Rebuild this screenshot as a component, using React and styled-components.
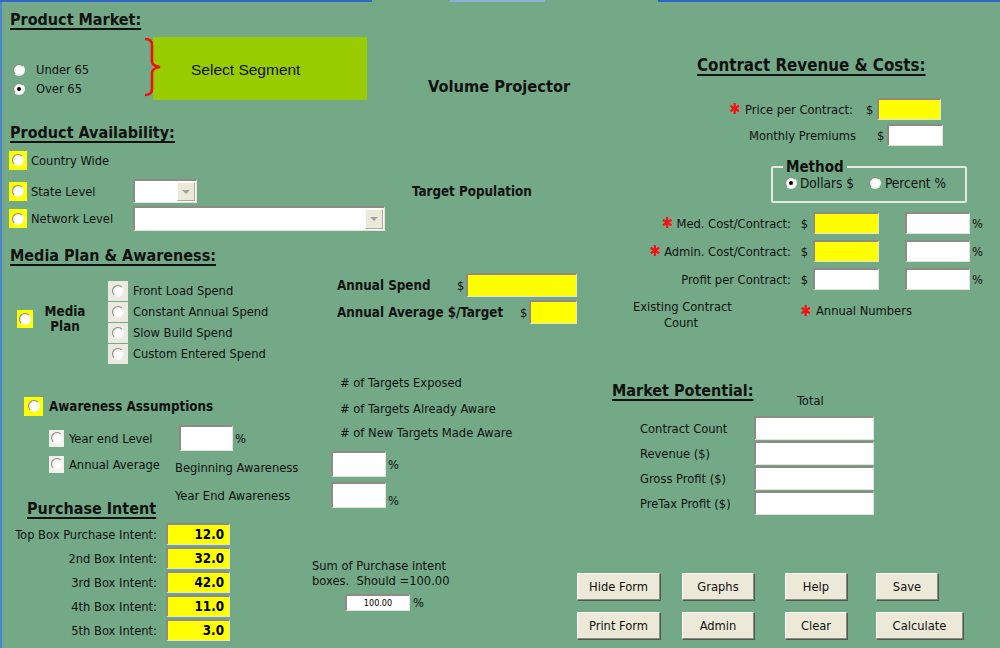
import React from 'react'
import styled, { createGlobalStyle } from 'styled-components'

const ui = `"DejaVu Sans Condensed", "DejaVu Sans", Tahoma, sans-serif`

const GlobalStyle = createGlobalStyle`
  html, body { margin: 0; padding: 0; background: #73a987; }
  body { font-family: ${ui}; font-size: 12.8px; color: #111; }
  * { box-sizing: border-box; }
`

const Page = styled.div`
  width: 1000px;
  height: 648px;
  overflow: hidden;
  background: #73a987;
  box-shadow: inset 2px 0 0 #4d84cf;
  display: flex;
  flex-direction: column;
`
const Strip = styled.div`
  display: flex;
  height: 2px;
  flex-shrink: 0;
`
const StripSeg = styled.div`
  width: ${p => p.$w}px;
  background: ${p => p.$c};
`
const Body = styled.div`
  display: flex;
  flex: 1;
`
const LeftCol = styled.div`
  width: 577px;
  display: flex;
  flex-direction: column;
  align-items: flex-start;
`
const RightCol = styled.div`
  flex: 1;
  display: flex;
  flex-direction: column;
  align-items: flex-start;
`
const SectionTitle = styled.div`
  margin: ${p => p.$mt || 0}px 0 0 ${p => p.$ml || 0}px;
  width: ${p => (p.$w ? p.$w + 'px' : 'auto')};
  flex-shrink: 0;
  height: 20px;
  line-height: 20px;
  font-size: ${p => p.$size || 16}px;
  font-weight: bold;
  color: #111;
  text-decoration: underline;
  text-decoration-thickness: 2px;
  text-underline-offset: 3px;
  white-space: nowrap;
`
const Row = styled.div`
  display: flex;
  align-items: ${p => p.$align || 'center'};
  width: ${p => (p.$w ? p.$w + 'px' : 'auto')};
  height: ${p => (p.$h ? p.$h + 'px' : 'auto')};
  margin: ${p => p.$mt || 0}px 0 0 ${p => p.$ml || 0}px;
  flex-shrink: 0;
`
const Col = styled.div`
  display: flex;
  flex-direction: column;
  align-items: flex-start;
  width: ${p => (p.$w ? p.$w + 'px' : 'auto')};
  margin: ${p => p.$mt || 0}px 0 0 ${p => p.$ml || 0}px;
  padding-top: ${p => p.$pt || 0}px;
  flex-shrink: 0;
`
const Txt = styled.span`
  display: inline-block;
  flex-shrink: 0;
  width: ${p => (p.$w ? p.$w + 'px' : 'auto')};
  margin: ${p => p.$mt || 0}px 0 0 ${p => p.$ml || 0}px;
  padding-right: ${p => p.$pr || 0}px;
  align-self: ${p => p.$self || 'auto'};
  font-size: ${p => p.$size || (p.$bold ? 13.3 : 12.8)}px;
  font-weight: ${p => (p.$bold ? 'bold' : 'normal')};
  line-height: ${p => p.$lh || 'normal'};
  text-align: ${p => p.$align || 'left'};
  white-space: nowrap;
  color: #111;
`
const Star = styled.span`
  display: inline-block;
  flex-shrink: 0;
  width: ${p => p.$w || 16}px;
  margin: ${p => p.$mt || 0}px 0 0 ${p => p.$ml || 0}px;
  color: #f01414;
  font-size: 15px;
  font-weight: bold;
  line-height: 14px;
  text-align: left;
`
const Radio = styled.span`
  position: relative;
  display: inline-block;
  flex-shrink: 0;
  width: 12px;
  height: 12px;
  border-radius: 50%;
  border: 1px solid;
  border-color: #8a8a82 #f6f6f0 #f6f6f0 #8a8a82;
  background: radial-gradient(circle at 55% 55%, #ffffff 0 40%, #e2e0d4 85%);
  &::after {
    content: '';
    position: absolute;
    left: 3px;
    top: 3px;
    width: 4px;
    height: 4px;
    border-radius: 50%;
    background: #000;
    display: ${p => (p.$on ? 'block' : 'none')};
  }
`
const Well = styled.span`
  display: inline-flex;
  align-items: center;
  justify-content: center;
  flex-shrink: 0;
  width: ${p => p.$w}px;
  height: ${p => p.$h}px;
  margin-left: ${p => p.$ml || 0}px;
  background: ${p => p.$bg};
`
const Field = styled.div`
  flex-shrink: 0;
  width: ${p => p.$w}px;
  height: ${p => p.$h || 22}px;
  margin-left: ${p => p.$ml || 0}px;
  background: ${p => (p.$yellow ? '#ffff00' : '#ffffff')};
  border-top: 2px solid #8c8c84;
  border-left: 2px solid #8c8c84;
  border-right: 1px solid #e4e4da;
  border-bottom: 1px solid #e4e4da;
  display: flex;
  align-items: center;
  justify-content: ${p => (p.$small ? 'center' : 'flex-end')};
  padding-right: ${p => (p.$small ? 0 : 5)}px;
  font-family: ${ui};
  font-size: ${p => (p.$small ? 9 : 13.3)}px;
  font-weight: ${p => (p.$small ? 'normal' : 'bold')};
  color: #000;
`
const Select = styled.div`
  flex-shrink: 0;
  width: ${p => p.$w}px;
  height: ${p => p.$h}px;
  background: #fff;
  border-top: 2px solid #8c8c84;
  border-left: 2px solid #8c8c84;
  border-right: 1px solid #e4e4da;
  border-bottom: 1px solid #e4e4da;
  display: flex;
  justify-content: flex-end;
  padding: 1px;
`
const DropBtn = styled.span`
  width: 18px;
  background: #ece9d8;
  border: 1px solid;
  border-color: #fbfbf6 #a8a89c #a8a89c #fbfbf6;
  display: flex;
  align-items: center;
  justify-content: center;
  &::before {
    content: '';
    border-left: 4px solid transparent;
    border-right: 4px solid transparent;
    border-top: 4px solid #a4a49c;
  }
`
const MarketRow = styled.div`
  display: flex;
  height: 63px;
  margin-top: 7px;
`
const RadioItem = styled.div`
  display: flex;
  align-items: center;
  height: ${p => p.$h || 19}px;
`
const BraceSvg = styled.svg`
  position: relative;
  z-index: 1;
  flex-shrink: 0;
`
const SegmentBox = styled.div`
  width: 214px;
  height: 63px;
  margin-left: -10px;
  background: #99cc00;
  display: flex;
  align-items: center;
  padding: 2px 0 0 38px;
  font-family: "Liberation Sans", Arial, sans-serif;
  font-size: 15.5px;
  color: #111;
`
const Headline = styled.div`
  align-self: flex-end;
  margin: 0 0 4px 61px;
  font-size: 16.3px;
  font-weight: bold;
  white-space: nowrap;
`
const Method = styled.fieldset`
  margin: 13px 0 0 194px;
  width: 196px;
  height: 44px;
  padding: 0 0 0 12px;
  border: 2px solid #e6e8e0;
  border-radius: 2px;
  display: flex;
  align-items: center;
`
const Legend = styled.legend`
  padding: 0 3px;
  margin-left: -2px;
  font-size: 15px;
  font-weight: bold;
  line-height: 16px;
  color: #111;
`
const ButtonGrid = styled.div`
  display: grid;
  grid-template-columns: 105px 103px 91px auto;
  row-gap: 12px;
  margin-top: 58px;
`
const Btn = styled.button`
  width: ${p => p.$w}px;
  height: 27px;
  padding: 0;
  font-family: ${ui};
  font-size: 12.8px;
  color: #111;
  background: #ece9d8;
  border: 1px solid;
  border-color: #ffffff #8c8a7c #8c8a7c #ffffff;
  box-shadow: 1px 1px 0 #4e5a50;
`

const spendOptions = ['Front Load Spend', 'Constant Annual Spend', 'Slow Build Spend', 'Custom Entered Spend']
const intents = [
  ['Top Box Purchase Intent:', '12.0'],
  ['2nd Box Intent:', '32.0'],
  ['3rd Box Intent:', '42.0'],
  ['4th Box Intent:', '11.0'],
  ['5th Box Intent:', '3.0'],
]
const costs = [
  { label: 'Med. Cost/Contract:', star: true, yellow: true },
  { label: 'Admin. Cost/Contract:', star: true, yellow: true },
  { label: 'Profit per Contract:', star: false, yellow: false },
]
const potentials = ['Contract Count', 'Revenue ($)', 'Gross Profit ($)', 'PreTax Profit ($)']

function YellowRadio({ w = 18, h = 19, ml }) {
  return (
    <Well $bg="#ffff00" $w={w} $h={h} $ml={ml}>
      <Radio />
    </Well>
  )
}

export default function App() {
  return (
    <Page>
      <GlobalStyle />
      <Strip>
        <StripSeg $w={372} $c="#2f64c8" />
        <StripSeg $w={78} $c="transparent" />
        <StripSeg $w={95} $c="#8fb0d8" />
        <StripSeg $w={113} $c="transparent" />
        <StripSeg $w={342} $c="#2f64c8" />
      </Strip>
      <Body>
        <LeftCol>
          <SectionTitle $ml={10} $mt={8}>Product Market:</SectionTitle>
          <MarketRow>
            <Col $ml={13} $pt={23} $w={130}>
              <RadioItem><Radio /><Txt $ml={11}>Under 65</Txt></RadioItem>
              <RadioItem><Radio $on /><Txt $ml={11}>Over 65</Txt></RadioItem>
            </Col>
            <BraceSvg width="20" height="60" viewBox="0 0 20 60">
              <path d="M2 2 Q9 2 9 8 L9 24 Q9 29 17 30 Q9 31 9 36 L9 52 Q9 58 2 58" stroke="#f01010" strokeWidth="2.6" fill="none" />
            </BraceSvg>
            <SegmentBox>Select Segment</SegmentBox>
            <Headline>Volume Projector</Headline>
          </MarketRow>

          <SectionTitle $ml={10} $mt={23}>Product Availability:</SectionTitle>
          <Row $ml={9} $mt={7} $h={20}>
            <YellowRadio />
            <Txt $ml={4} $w={102}>Country Wide</Txt>
          </Row>
          <Row $ml={9} $mt={9} $h={24}>
            <YellowRadio />
            <Txt $ml={4} $w={102}>State Level</Txt>
            <Select $w={64} $h={24}><DropBtn /></Select>
            <Txt $ml={215} $bold>Target Population</Txt>
          </Row>
          <Row $ml={9} $mt={3} $h={25}>
            <YellowRadio />
            <Txt $ml={4} $w={102}>Network Level</Txt>
            <Select $w={252} $h={25}><DropBtn /></Select>
          </Row>

          <SectionTitle $ml={10} $mt={15}>Media Plan &amp; Awareness:</SectionTitle>
          <Row $mt={7} $h={92} $align="stretch">
            <Row $ml={17} $w={91} $align="center">
              <YellowRadio w={16} h={18} />
              <Txt $ml={8} $w={48} $bold $align="center" $lh="15px">Media<br />Plan</Txt>
            </Row>
            <Col $pt={7} $w={229}>
              {spendOptions.map(o => (
                <RadioItem key={o} $h={21}>
                  <Well $bg="#ece9e0" $w={20} $h={20}><Radio /></Well>
                  <Txt $ml={5}>{o}</Txt>
                </RadioItem>
              ))}
            </Col>
            <Col>
              <Row $h={24}>
                <Txt $w={120} $bold>Annual Spend</Txt>
                <Txt $w={9}>$</Txt>
                <Field $yellow $w={111} $h={24} />
              </Row>
              <Row $h={24} $mt={3}>
                <Txt $w={183} $bold>Annual Average $/Target</Txt>
                <Txt $w={9}>$</Txt>
                <Field $yellow $w={48} $h={24} />
              </Row>
            </Col>
          </Row>

          <Row $ml={340} $mt={7} $h={20}>
            <Txt># of Targets Exposed</Txt>
          </Row>
          <Row $mt={4} $h={20}>
            <YellowRadio w={19} h={19} ml={24} />
            <Txt $ml={6} $w={291} $bold>Awareness Assumptions</Txt>
            <Txt $self="flex-end"># of Targets Already Aware</Txt>
          </Row>
          <Row $mt={9} $h={26}>
            <Well $bg="#f2f2ec" $w={15} $h={17} $ml={49}><Radio /></Well>
            <Txt $ml={5} $w={110}>Year end Level</Txt>
            <Field $w={54} $h={26} />
            <Txt $ml={2} $w={10}>%</Txt>
            <Txt $ml={95} $self="flex-start"># of New Targets Made Aware</Txt>
          </Row>
          <Row $h={26}>
            <Well $bg="#f2f2ec" $w={15} $h={17} $ml={49}><Radio /></Well>
            <Txt $ml={5} $w={106}>Annual Average</Txt>
            <Txt $w={156} $mt={6}>Beginning Awareness</Txt>
            <Field $w={55} $h={26} />
            <Txt $ml={2}>%</Txt>
          </Row>
          <Row $mt={5} $h={26}>
            <Txt $ml={175} $w={156}>Year End Awareness</Txt>
            <Field $w={55} $h={26} />
            <Txt $ml={2} $self="flex-end">%</Txt>
          </Row>

          <Row $mt={-9} $align="flex-start">
            <Col $w={230}>
              <SectionTitle $ml={27}>Purchase Intent</SectionTitle>
              <Col $mt={2}>
                {intents.map(([label, value]) => (
                  <Row key={label} $h={22} $mt={2}>
                    <Txt $w={157} $align="right">{label}</Txt>
                    <Field $yellow $ml={9} $w={64} $h={22}>{value}</Field>
                  </Row>
                ))}
              </Col>
            </Col>
            <Col $ml={82} $mt={59}>
              <Txt $lh="15px">Sum of Purchase intent<br />boxes.&nbsp; Should =100.00</Txt>
              <Row $ml={33} $mt={6}>
                <Field $small $w={65} $h={17}>100.00</Field>
                <Txt $ml={3}>%</Txt>
              </Row>
            </Col>
          </Row>
        </LeftCol>

        <RightCol>
          <SectionTitle $ml={120} $mt={53} $size={16.8}>Contract Revenue &amp; Costs:</SectionTitle>
          <Row $ml={152} $mt={23} $h={22}>
            <Star>✱</Star>
            <Txt $w={121}>Price per Contract:</Txt>
            <Txt $w={11}>$</Txt>
            <Field $yellow $w={64} $h={22} />
          </Row>
          <Row $ml={172} $mt={4} $h={22}>
            <Txt $w={128}>Monthly Premiums</Txt>
            <Txt $w={10}>$</Txt>
            <Field $w={56} $h={22} />
          </Row>

          <Method>
            <Legend>Method</Legend>
            <Radio $on />
            <Txt $ml={3} $w={69} $size={13.5}>Dollars $</Txt>
            <Radio />
            <Txt $ml={4} $size={13.5}>Percent %</Txt>
          </Method>

          <Col $mt={3}>
            {costs.map(c => (
              <Row key={c.label} $h={22} $mt={6}>
                <Txt $w={220} $align="right" $pr={6}>
                  {c.star && <Star $w={15}>✱</Star>}
                  {c.label}
                </Txt>
                <Txt $w={16}>&nbsp;$</Txt>
                <Field $yellow={c.yellow} $w={66} $h={22} />
                <Field $ml={26} $w={65} $h={22} />
                <Txt $ml={2}>%</Txt>
              </Row>
            ))}
          </Col>

          <Row $mt={9} $align="flex-start">
            <Txt $ml={56} $w={96} $align="center" $lh="16px">Existing Contract<br />Count</Txt>
            <Star $ml={71} $mt={5}>✱</Star>
            <Txt $mt={4}>Annual Numbers</Txt>
          </Row>

          <Row $mt={50} $align="flex-start">
            <SectionTitle $ml={35} $w={185}>Market Potential:</SectionTitle>
            <Txt $mt={12}>Total</Txt>
          </Row>
          <Col $mt={7}>
            {potentials.map(p => (
              <Row key={p} $h={24} $mt={1}>
                <Txt $ml={63} $w={114}>{p}</Txt>
                <Field $w={120} $h={24} />
              </Row>
            ))}
          </Col>

          <ButtonGrid>
            <Btn $w={83}>Hide Form</Btn>
            <Btn $w={72}>Graphs</Btn>
            <Btn $w={62}>Help</Btn>
            <Btn $w={62}>Save</Btn>
            <Btn $w={83}>Print Form</Btn>
            <Btn $w={72}>Admin</Btn>
            <Btn $w={62}>Clear</Btn>
            <Btn $w={87}>Calculate</Btn>
          </ButtonGrid>
        </RightCol>
      </Body>
    </Page>
  )
}
